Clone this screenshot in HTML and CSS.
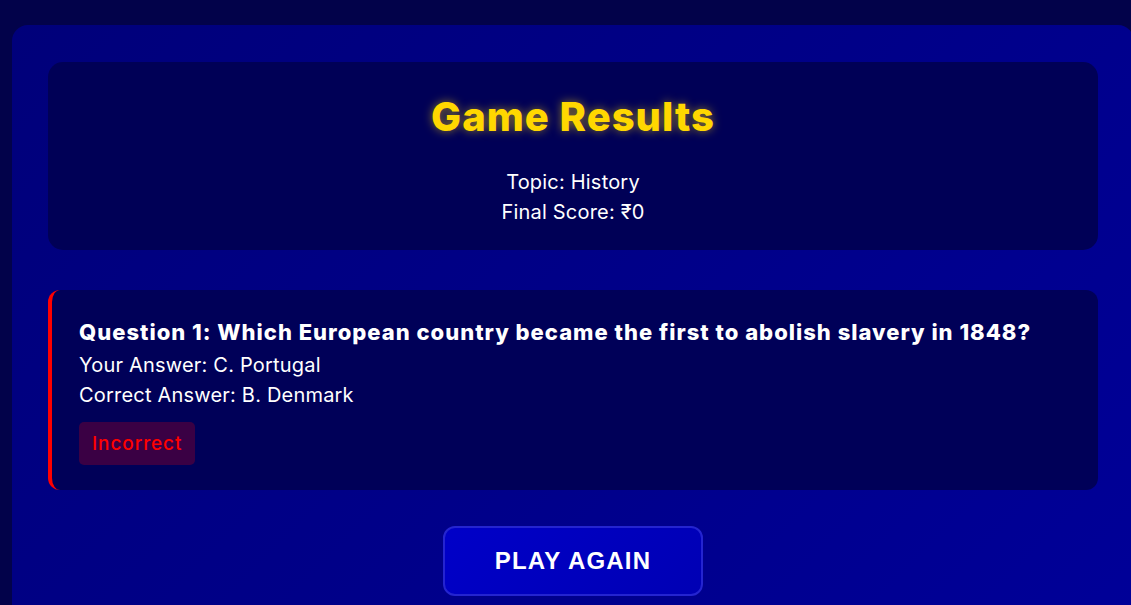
FILE: index.html
```html
<!DOCTYPE html>
<html lang="en">
<head>
<meta charset="utf-8">
<title>Game Results</title>
<link rel="stylesheet" href="styles.css">
</head>
<body>
<div class="page">
  <section class="results">
    <header class="summary">
      <h1 class="title">Game Results</h1>
      <p class="meta">Topic: History</p>
      <p class="meta">Final Score: ₹0</p>
    </header>
    <article class="answer answer--wrong">
      <h2 class="question">Question 1: Which European country became the first to abolish slavery in 1848?</h2>
      <p class="line">Your Answer: C. Portugal</p>
      <p class="line">Correct Answer: B. Denmark</p>
      <span class="badge">Incorrect</span>
    </article>
    <div class="actions">
      <button class="play">PLAY AGAIN</button>
    </div>
  </section>
</div>
</body>
</html>
```
FILE: styles.css
```css
html, body {
  margin: 0;
  padding: 0;
  height: 100%;
  overflow: hidden;
}
body {
  background: #02024a;
  font-family: "Inter", "Open Sans", sans-serif;
  color: #ffffff;
}
.page {
  padding: 25px 0 0 12px;
  width: 1122px;
}
.results {
  background: linear-gradient(135deg, #00007a 0%, #000088 50%, #000098 100%);
  border-radius: 16px;
  padding: 37px 36px 24px 36px;
}
.summary {
  background: #000056;
  border-radius: 15px;
  height: 188px;
  box-sizing: border-box;
  padding-top: 30px;
  text-align: center;
}
.title {
  margin: 0 0 25px 0;
  font-size: 40px;
  line-height: 50px;
  font-weight: 800;
  letter-spacing: 1px;
  color: #ffd700;
  text-shadow: 0 0 10px rgba(255, 215, 0, 0.55);
}
.meta {
  margin: 0;
  font-size: 20px;
  line-height: 30px;
  letter-spacing: 0.2px;
}
.answer {
  margin-top: 40px;
  background: #000058;
  border-left: 4px solid #ff0000;
  border-radius: 12px;
  height: 200px;
  box-sizing: border-box;
  padding: 26px 27px;
}
.question {
  margin: 0 0 2px 0;
  font-size: 22px;
  line-height: 32px;
  font-weight: 800;
  letter-spacing: 1px;
}
.line {
  margin: 0;
  font-size: 20px;
  line-height: 30px;
  letter-spacing: 0.2px;
}
.badge {
  display: inline-block;
  margin-top: 12px;
  padding: 0 13px;
  height: 43px;
  line-height: 43px;
  border-radius: 5px;
  background: #3a0044;
  color: #ff0000;
  font-size: 19px;
  font-weight: 500;
  letter-spacing: 0.9px;
}
.actions {
  display: flex;
  justify-content: center;
  margin-top: 36px;
}
.play {
  width: 260px;
  height: 70px;
  border-radius: 12px;
  border: 2px solid #2424d0;
  background: linear-gradient(135deg, #0000c8, #0000b4);
  color: #ffffff;
  font-family: "Liberation Sans", Arial, sans-serif;
  font-weight: 700;
  font-size: 24px;
  letter-spacing: 1.2px;
}
```
